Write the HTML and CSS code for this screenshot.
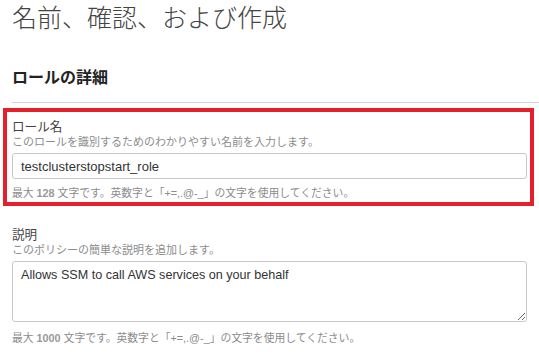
FILE: index.html
```html
<!DOCTYPE html>
<html lang="ja">
<head>
<meta charset="utf-8">
<title>名前、確認、および作成</title>
<link rel="stylesheet" href="styles.css">
</head>
<body>
<main class="page">
  <h1 class="title">名前、確認、および作成</h1>
  <h2 class="section-title">ロールの詳細</h2>
  <div class="divider"></div>
  <div class="field field-highlight">
    <label class="label" for="role-name">ロール名</label>
    <div class="desc">このロールを識別するためのわかりやすい名前を入力します。</div>
    <input id="role-name" class="input" type="text" value="testclusterstopstart_role">
    <div class="hint">最大 <span class="num">128</span> 文字です。英数字と「+=,.@-_」の文字を使用してください。</div>
  </div>
  <div class="field field-plain">
    <label class="label" for="role-desc">説明</label>
    <div class="desc">このポリシーの簡単な説明を追加します。</div>
    <textarea id="role-desc" class="textarea">Allows SSM to call AWS services on your behalf</textarea>
    <div class="hint hint-after-area">最大 <span class="num">1000</span> 文字です。英数字と「+=,.@-_」の文字を使用してください。</div>
  </div>
</main>
</body>
</html>
```

FILE: styles.css
```css
* { box-sizing: border-box; }

html, body {
  margin: 0;
  padding: 0;
  background: #ffffff;
}

body {
  font-family: "Liberation Sans", "Noto Sans CJK JP", sans-serif;
  color: #333333;
}

.page {
  display: flex;
  flex-direction: column;
  padding-top: 3px;
}

.title {
  margin: 0 0 0 12px;
  font-size: 25px;
  line-height: 30px;
  font-weight: 300;
  color: #444444;
}

.section-title {
  margin: 35px 0 0 12px;
  font-size: 16px;
  line-height: 20px;
  font-weight: 700;
  color: #222222;
}

.divider {
  margin: 14px 0 0 12px;
  height: 1px;
  background: #d5d5d5;
}

.field {
  display: flex;
  flex-direction: column;
}

.field-highlight {
  margin: 5px 5px 0 3px;
  border: 4px solid #e3202b;
  padding: 7px 3px 1px 5px;
}

.field-plain {
  margin: 21px 12px 0 12px;
}

.label {
  font-size: 12.6px;
  line-height: 16px;
  color: #444444;
}

.desc {
  font-size: 11px;
  line-height: 15px;
  color: #8c8c8c;
}

.input,
.textarea {
  margin-top: 3px;
  width: 100%;
  border: 1px solid #c8c8c8;
  border-radius: 3px;
  background: #ffffff;
  font-family: "Liberation Sans", Arial, sans-serif;
  color: #333333;
  outline: none;
}

.input {
  height: 26px;
  padding: 0 8px;
  font-size: 13px;
}

.textarea {
  height: 61px;
  padding: 5px 8px;
  font-size: 12.6px;
  line-height: 17px;
  resize: vertical;
  display: block;
}

.hint {
  margin-top: 7px;
  font-size: 10.8px;
  line-height: 15px;
  color: #8c8c8c;
}

.hint-after-area {
  margin-top: 9px;
}

.num {
  font-weight: 700;
  color: #999999;
}
```
